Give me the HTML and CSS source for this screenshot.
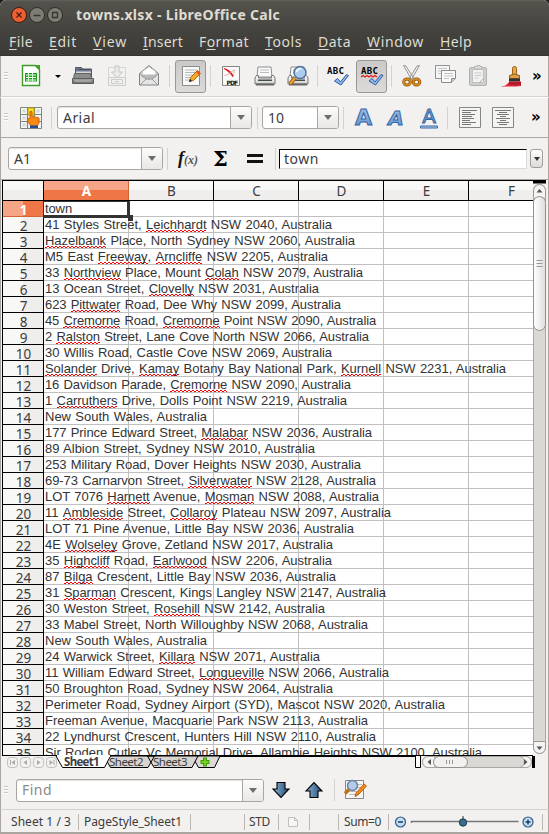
FILE: index.html
```html
<!DOCTYPE html>
<html lang="en">
<head>
<meta charset="utf-8">
<title>towns.xlsx - LibreOffice Calc</title>
<link rel="stylesheet" href="styles.css">
</head>
<body>
<svg width="0" height="0" class="defs">
  <defs>
    <linearGradient id="gray" x1="0" y1="0" x2="0" y2="1"><stop offset="0" stop-color="#a5a8a6"/><stop offset="1" stop-color="#6b6e6c"/></linearGradient>
    <linearGradient id="light" x1="0" y1="0" x2="0" y2="1"><stop offset="0" stop-color="#ffffff"/><stop offset="1" stop-color="#cfd1cf"/></linearGradient>
    <linearGradient id="navy" x1="0" y1="0" x2="1" y2="0"><stop offset="0" stop-color="#8fb4d8"/><stop offset="1" stop-color="#214a74"/></linearGradient>
    <linearGradient id="letter" x1="0" y1="0" x2="0" y2="1"><stop offset="0" stop-color="#a8c6ea"/><stop offset="1" stop-color="#5f8fce"/></linearGradient>
    <g id="check"><path d="M1 8 L4 5.500 L7 9 L13 1.500 L15 2.500 L7.500 12 Z" fill="#8fb8ec" stroke="#2d5ca0" stroke-linejoin="round"/></g>
    <g id="printer">
      <path d="M5 3h13l1 10H4z" fill="#fafafa" stroke="#8c8e8c"/>
      <path d="M7 6h9M7 8.500h9" stroke="#b9bbb9"/>
      <path d="M3.500 11.500 2 14v6h20v-6l-1.500-2.500h-2V14h-13v-2.500z" fill="url(#light)" stroke="#777"/>
      <path d="M5 15.500h14v1.500H5z" fill="#4b4d4b"/><path d="M3 20.500h18" stroke="#666" stroke-width="2"/>
    </g>
  </defs>
</svg>
<div class="window">
  <header class="titlebar">
    <svg class="wm" width="54" height="18" viewBox="0 0 54 18">
      <circle cx="8" cy="9" r="7.500" fill="#ec5f33" stroke="#3a1c10"/><path d="M5.500 6.500l5 5M10.500 6.500l-5 5" stroke="#4a1d10" stroke-width="1.300"/>
      <circle cx="26" cy="9" r="7.500" fill="#7d7c75" stroke="#2e2d29"/><path d="M22.500 9.500h7" stroke="#36352f" stroke-width="1.300"/>
      <circle cx="44" cy="9" r="7.500" fill="#7d7c75" stroke="#2e2d29"/><path d="M41.500 6.500h5v5h-5z" fill="none" stroke="#36352f" stroke-width="1.300"/>
    </svg>
    <h1><span data-w="204">towns.xlsx - LibreOffice Calc</span></h1>
  </header>
  <nav class="menubar">
    <span data-w="24"><u>F</u>ile</span><span data-w="28"><u>E</u>dit</span><span data-w="34"><u>V</u>iew</span><span data-w="40"><u>I</u>nsert</span><span data-w="50">F<u>o</u>rmat</span><span data-w="37"><u>T</u>ools</span><span data-w="33"><u>D</u>ata</span><span data-w="57"><u>W</u>indow</span><span data-w="32"><u>H</u>elp</span>
  </nav>

  <div class="toolbar standard">
    <i class="grip"></i>
    <svg width="24" height="24" viewBox="0 0 24 24"><path d="M2.500 1.500h13l4 4v16h-17z" fill="#fff" stroke="#3f9a28" stroke-width="1.400"/><path d="M14 1h6v6z" fill="#3aa51e"/><path d="M5 9h12v8.500H5z" fill="#17a017"/><path d="M6 11h10M6 13.500h10M6 16h10" stroke="#fff"/><path d="M8.500 9v8.500M12.500 9v8.500" stroke="#d8f3d4"/></svg>
    <i class="caret"></i>
    <svg width="24" height="24" viewBox="0 0 24 24"><path d="M4.500 3.500h6l1 1.500h9v8h-16z" fill="#70798f" stroke="#52565c"/><path d="M5 7.500h15V13H5z" fill="#d6d7d6"/><path d="M7 5.500h12" stroke="#49516b"/><path d="M3.500 9.500h16l1 5h-18z" fill="#8b8e8c" stroke="#606260"/><path d="M1.500 14.500h21v5h-21z" fill="url(#gray)" stroke="#5b5d5b"/><path d="M4 17h16" stroke="#bbb"/></svg>
    <svg class="off" width="24" height="24" viewBox="0 0 24 24"><path d="M3.500 3.500h17v12h-17z" fill="#f4f4f4" stroke="#aaa"/><path d="M10 2h4v6h3.500l-5.500 6-5.500-6H10z" fill="#e3e3e3" stroke="#888"/><path d="M3.500 13.500h17v8h-17zM6.500 15.500h11v4h-11zM10 17.500h4" fill="#eee" stroke="#999"/></svg>
    <svg width="24" height="24" viewBox="0 0 24 24"><path d="M2.500 9.500 12 1.500l9.500 8v11.500h-19z" fill="#e3e4e3" stroke="#808280"/><path d="M5 7.500 12 2.500l7 5v5l-7 3-7-3z" fill="#fff" stroke="#aeb0ae"/><path d="M4 10.500h16l-5 4.500H9z" fill="#b9bbb9"/><path d="M3 10l6 5h6l6-5M3 21l6-6M21 21l-6-6" fill="none" stroke="#9a9c9a"/></svg>
    <i class="sep"></i>
    <b class="pressed"><svg width="24" height="24" viewBox="0 0 24 24"><path d="M3.500 2.500h17v19h-17z" fill="#fafafa" stroke="#8a8c8a"/><path d="M6 6h12M6 8.500h10M6 11h12M6 13.500h6M6 16h5" stroke="#b6b8b6"/><path d="M10.500 17.500l1-4 7-7 3 3-7 7z" fill="#f9a928" stroke="#b36a0b"/><path d="M17 8l3 3 1.500-1.500-3-3z" fill="#e5541e"/><path d="M10 18l1-3 2 2z" fill="#222"/></svg></b>
    <i class="sep"></i>
    <svg width="24" height="24" viewBox="0 0 24 24"><path d="M2.500 2.500h17v19h-17z" fill="#fafafa" stroke="#858785"/><path d="M4 4c4 1 7 3 10 8l-1.500 1C10 9 7 7 4 5z" fill="#e31c1c"/><path d="M4.500 11.500c4-1 7-3 9.500-6v4" fill="none" stroke="#f2a0a0"/><path d="M6 14.500h12V21H6z" fill="#f8f8f8"/><text x="6.500" y="20.500" class="pdf" textLength="11.500">PDF</text></svg>
    <svg width="24" height="24" viewBox="0 0 24 24"><use href="#printer"/></svg>
    <svg width="24" height="24" viewBox="0 0 24 24"><use href="#printer"/><circle cx="14" cy="8.500" r="6" fill="#aaccef" stroke="#56749b" stroke-width="1.500"/><path d="M10.500 8a4 4 0 0 1 5-3" fill="none" stroke="#fff" stroke-width="1.500"/><path d="M9 14l-5 6" stroke="#9a5b0a" stroke-width="4"/><path d="M9 14l-5 6" stroke="#eda534" stroke-width="2"/></svg>
    <i class="sep"></i>
    <svg width="24" height="24" viewBox="0 0 24 24"><text x="2" y="10" class="abc" textLength="17">ABC</text><use href="#check" x="8.500" y="9"/></svg>
    <b class="pressed"><svg width="24" height="24" viewBox="0 0 24 24"><text x="1" y="10" class="abc" textLength="17">ABC</text><path d="M1 13l2-1.500 2 1.500 2-1.500 2 1.500 2-1.500 2 1.500 2-1.500 2 1.500" fill="none" stroke="#e01818" stroke-width="1.100"/><use href="#check" x="8" y="9"/></svg></b>
    <i class="sep"></i>
    <svg width="24" height="24" viewBox="0 0 24 24"><path d="M2.500 1.500 5 2l7.500 12-2 1.500zM18.500 1.500 16 2 8.500 14l2 1.500z" fill="#eee" stroke="#8a8c8a" stroke-width=".9"/><ellipse cx="6" cy="18" rx="3.300" ry="3" fill="none" stroke="#8a4d04" stroke-width="3"/><ellipse cx="6" cy="18" rx="3.300" ry="3" fill="none" stroke="#dc9020" stroke-width="1.500"/><ellipse cx="15.500" cy="18" rx="3.300" ry="3" fill="none" stroke="#8a4d04" stroke-width="3"/><ellipse cx="15.500" cy="18" rx="3.300" ry="3" fill="none" stroke="#dc9020" stroke-width="1.500"/></svg>
    <svg width="24" height="24" viewBox="0 0 24 24"><path d="M1.500 1.500h14v13h-14z" fill="#f4f4f4" stroke="#929492"/><path d="M4 4.500h9M4 7h9M4 9.500h4" stroke="#c6c8c6"/><path d="M7.500 6.500h14v8l-4 4h-10z" fill="#fafafa" stroke="#8a8c8a"/><path d="M21.500 14.500h-4v4" fill="#ccc" stroke="#8a8c8a"/><path d="M10 9.500h9M10 12h9M10 14.500h5" stroke="#bfc1bf"/></svg>
    <svg width="24" height="24" viewBox="0 0 24 24"><rect x="2.500" y="3.500" width="17" height="18" rx="1.500" fill="#cfcfce" stroke="#b2b2b1"/><path d="M5.500 5.500h11v13h-11z" fill="#f2f2f2" stroke="#c0c0c0"/><path d="M7.500 5V2.500h2.500V1.500h3V2.500H15V5z" fill="#ddd" stroke="#b4b4b4"/><path d="M7.500 9h7M7.500 11.500h7M7.500 14h4" stroke="#c9c9c9"/><path d="M12.500 18.500l4-4" stroke="#aaa"/></svg>
    <svg width="24" height="24" viewBox="0 0 24 24"><path d="M1 23c4-1 6-1 9-5h12v4c-7 1-14 0-21 1z" fill="#e5263b"/><rect x="13.500" y="2.500" width="4" height="9" rx="2" fill="#e8a84b" stroke="#9b6112"/><path d="M10.500 11.500q5-3 10 0v3h-10z" fill="#e0a04a" stroke="#8a5a1a"/><path d="M10 14.500h11v3H10z" fill="#303030"/><path d="M10 17.500h12v4l-3-1-2 1.500-2-1.500-2 1-3-1z" fill="#b5192a"/></svg>
    <span class="more">»</span>
  </div>

  <div class="toolbar formatting">
    <i class="grip"></i>
    <svg width="24" height="24" viewBox="0 0 24 24"><path d="M1.500 1.500h21v21h-21z" fill="#f5f6f5" stroke="#7d867e"/><path d="M8.500 1.500v21M15.500 1.500v21M1.500 8.500h21M1.500 15.500h21" stroke="#7d867e" stroke-width="1.200"/><path d="M3.500 3.500h3v3h-3zM3.500 10.500h3v3h-3zM3.500 17.500h3v3h-3zM17.500 3.500h3v3h-3z" fill="#d2d7d3"/><path d="M9 2h6v7H9z" fill="#ffe72b" stroke="#b49b00"/><path d="M11 5.500q1-1 2 0v5l7 1.500v5L18 20h-6l-3.500-5v-3l2.500 1z" fill="#fa8a15" stroke="#d35f00"/><path d="M11 19.500h8V22h-8z" fill="#254c8e"/></svg>
    <i class="sep"></i>
    <div class="combo"><span data-w="32">Arial</span><i></i></div>
    <i class="sep"></i>
    <div class="combo"><span data-w="16">10</span><i></i></div>
    <i class="sep"></i>
    <svg width="24" height="24" viewBox="0 0 24 24"><text x="12.500" y="18.500" class="style bold" text-anchor="middle">A</text></svg>
    <svg width="24" height="24" viewBox="0 0 24 24"><text x="12" y="18.500" class="style italic" text-anchor="middle">A</text></svg>
    <svg width="24" height="24" viewBox="0 0 24 24"><text x="13" y="16.500" class="style" text-anchor="middle">A</text><path d="M4.500 20h17v2h-17z" fill="#b4d0f0" stroke="#3465a4"/></svg>
    <i class="sep"></i>
    <svg width="24" height="24" viewBox="0 0 24 24"><path d="M3.500 1.500h21v20h-21z" fill="#f4f5f3" stroke="#858785"/><path d="M6 4.500h15M6 6.500h9M6 8.500h13M6 10.500h10M6 12.500h12M6 14.500h8M6 16.500h14M6 18.500h9" stroke="#777977"/></svg>
    <svg width="26" height="24" viewBox="0 0 26 24"><path d="M3.500 1.500h21v20h-21z" fill="#f4f5f3" stroke="#858785"/><path d="M6 4.500h16M10 6.500h8M8 8.500h12M11 10.500h6M7 12.500h14M11 14.500h6M8 16.500h12M10 18.500h8" stroke="#777977"/></svg>
    <span class="more">»</span>
  </div>

  <div class="toolbar formula">
    <div class="combo"><span data-w="17">A1</span><i></i></div>
    <i class="sep"></i>
    <span class="fx"><span>f</span><small>(x)</small></span>
    <span class="sigma">Σ</span>
    <i class="equals"></i>
    <i class="sep"></i>
    <div class="line"><span data-w="35">town</span></div>
    <i class="expand"></i>
  </div>

  <main class="sheet">
    <div class="grid">
      <div class="cols"><i></i><b>A</b><span>B</span><span>C</span><span>D</span><span>E</span><span>F</span></div>
      <div class="rows" id="rows"></div>
    </div>
    <div class="vscroll">
      <svg width="14" height="575" viewBox="0 0 14 575"><rect x=".5" y="4.500" width="12" height="569" rx="6" fill="#dad8d5" stroke="#aaa7a2"/><path d="M.5 17V10.500a6 6 0 0 1 12 0V17" fill="#f5f4f3" stroke="#9b9893"/><path d="M3.500 12.500h6L6.500 9z" fill="#555"/><rect x=".5" y="16.500" width="12" height="134" rx="6" fill="url(#thumb)" stroke="#94918c"/><path d="M3.500 80.500h6M3.500 83.500h6M3.500 86.500h6" stroke="#999"/><path d="M.5 561.500h12v6a6 6 0 0 1-12 0z" fill="#f5f4f3" stroke="#9b9893"/><path d="M3.500 566.500h6l-3 3.500z" fill="#555"/><path d="M0 0h13v3.500H0z"/><linearGradient id="thumb"><stop offset="0" stop-color="#fff"/><stop offset="1" stop-color="#dedcd9"/></linearGradient></svg>
    </div>
  </main>

  <div class="tabs">
    <svg class="nav" width="54" height="13" viewBox="0 0 54 13"><g fill="#f2f1f0" stroke="#c2bfbb"><rect x="1.500" y="1.500" width="10" height="10" rx="3"/><rect x="14.500" y="1.500" width="10" height="10" rx="3"/><rect x="27.500" y="1.500" width="10" height="10" rx="3"/><rect x="40.500" y="1.500" width="10" height="10" rx="3"/></g><path d="M9 4v5L5.500 6.500zM21 4v5l-3.500-2.500zM31 4v5l3.500-2.500zM43.500 4v5L47 6.500z" fill="#aaa"/><path d="M4.500 4v5M48 4v5" stroke="#aaa"/></svg>
    <div class="tabstrip">
      <svg width="165" height="13" viewBox="0 0 165 13"><path d="M136 0l6.500 11.500h16L164 .0z" fill="#dddad6" stroke="#000"/><path d="M91.500 0 98 11.500h38L142 0zM48 0l6.500 11.500H92L98.500 0z" fill="#d8d5d1" stroke="#000"/><path d="M0 0l6.500 11.500h42L54.500 0z" fill="#fff" stroke="#000"/><path d="M1 0h53" stroke="#fff" stroke-width="2"/><path d="M149 1.500v9M144.500 6h9" stroke="#3f9a18" stroke-width="4"/><path d="M149 2.500v7M145.500 6h7" stroke="#73d216" stroke-width="2"/></svg>
      <div class="labels"><b data-w="35">Sheet1</b><span data-w="34">Sheet2</span><span data-w="34">Sheet3</span></div>
    </div>
    <svg class="hscroll" width="121" height="13" viewBox="0 0 121 13"><path d="M.5 0v11.500h5V0" fill="#fff" stroke="#000"/><rect x="7.500" y=".5" width="109" height="11" rx="5.500" fill="#dad8d5" stroke="#aaa7a2"/><path d="M20 .5h-7a5.500 5.500 0 0 0 0 11h7zM104 .5h7a5.500 5.500 0 0 1 0 11h-7a5.500 5.500 0 0 0 0-11" fill="#f5f4f3" stroke="#aaa7a2"/><rect x="18.500" y=".5" width="34" height="11" rx="5.500" fill="#f2f1f0" stroke="#94918c"/><path d="M31.500 4v4M34.500 4v4M37.500 4v4" stroke="#999"/><path d="M16 3v6l-3.500-3zM109 3v6l3.500-3z" fill="#555"/><path d="M117 0h3v12h-3z"/></svg>
  </div>

  <div class="toolbar find">
    <i class="grip"></i>
    <div class="combo hint"><span data-w="30">Find</span><i></i></div>
    <svg width="18" height="18" viewBox="0 0 18 18"><path d="M5 1.500h8V8h4l-8 8.500L1 8h4z" fill="url(#navy)" stroke="#000" stroke-width="1.100"/></svg>
    <svg width="18" height="18" viewBox="0 0 18 18"><path d="M5 16.500h8V10h4L9 1.500 1 10h4z" fill="url(#navy)" stroke="#000" stroke-width="1.100"/></svg>
    <i class="sep"></i>
    <svg width="24" height="24" viewBox="0 0 24 24"><path d="M2.500 2.500h18v18h-18z" fill="#f6f6f6" stroke="#858785"/><path d="M12 6.500h7M12 9.500h6M6 13.500h10M6 16.500h8" stroke="#bbb"/><circle cx="9.500" cy="7.500" r="5" fill="#b4cbe6" stroke="#6b83a3" stroke-width="1.500"/><path d="M6 11.500l-4 4" stroke="#b87314" stroke-width="3.500"/><path d="M12 18.500l1-3.500 8-9 2.500 2-8.500 9z" fill="#f28a1c" stroke="#b9600b"/></svg>
  </div>

  <footer class="status">
    <span data-w="60">Sheet 1 / 3</span><i></i><span data-w="98">PageStyle_Sheet1</span><i></i><span></span><i></i><span data-w="21">STD</span><i></i>
    <svg width="12" height="12" viewBox="0 0 12 12"><path d="M1.500 1.500h6l3 3v6h-9z" fill="#f7f6f5" stroke="#c2bfbb"/><path d="M7.500 1.500v3h3" fill="none" stroke="#c2bfbb"/></svg>
    <i></i><span></span><i></i><span data-w="37">Sum=0</span><i></i>
    <svg width="142" height="14" viewBox="0 0 142 14"><g fill="#c5dcf2" stroke="#2f5b85" stroke-width="1.200"><circle cx="7.500" cy="7" r="5"/><circle cx="135" cy="7" r="5"/></g><path d="M5 7h5M132.500 7h5M135 4.500v5" stroke="#163d66" stroke-width="1.500"/><path d="M18.500 8V6.500h107" fill="none" stroke="#777" stroke-width="1.500"/><circle cx="70" cy="7.500" r="3.700" fill="#3b6b8b" stroke="#173c52"/><path d="M70 1v3" stroke="#333"/></svg>
    <i></i>
  </footer>
</div>
<script src="sheet.js"></script>
</body>
</html>
```
FILE: styles.css
```css
*, *::before, *::after { box-sizing: border-box; }
body { margin: 0; background: #1c1b19; color: #3c3c3c; font: 14px/18px "Noto Sans", "Open Sans", sans-serif; }
i, u { font-style: normal; }
svg { display: block; overflow: visible; }
.defs { position: absolute; }
[data-w] { display: inline-block; white-space: pre; }
.window { width: 549px; height: 834px; overflow: hidden; background: #f2f1f0; border-radius: 6px 6px 0 0; display: flex; flex-direction: column; }
.window > * { flex: none; }

.titlebar { height: 28px; background: linear-gradient(#62615a 0, #53524c 2px, #45443f 100%); display: flex; align-items: center; padding: 1px 0 0 11px; }
.titlebar h1 { margin: 0 0 0 11px; font-size: 14px; line-height: 18px; font-weight: 700; color: #dfdbd2; }
.menubar { height: 28px; background: linear-gradient(#44433e, #3c3b37); color: #dfdbd2; display: flex; align-items: center; gap: 16px; padding-left: 9px; border-bottom: 1px solid #34332f; }
.menubar u { text-decoration: underline; text-underline-offset: 2px; text-decoration-thickness: 1px; }

.toolbar { display: grid; align-items: center; border-left: 1px solid #aaa59e; border-right: 1px solid #aaa59e; }
.standard { height: 41px; padding-left: 3px; border-bottom: 1px solid #d3d0cc; grid-template-columns: 16px 34px 17px 34px 32px 32px 6px 35px 10px 33px 33px 31px 8px 31px 35px 10px 33px 33px 32px 33px 14px; }
.formatting { height: 41px; padding-left: 3px; border-bottom: 1px solid #aaa7a2; border-top: 1px solid #fff; grid-template-columns: 15px 32px 6px 200px 5px 81px 8px 33px 32px 31px 9px 33px 42px 14px; }
.formula { height: 42px; padding-left: 7px; border-bottom: 1px solid #aaa7a2; grid-template-columns: 159px 11px 35px 34px 28px 4px 251px 14px; }
.off { opacity: .4; }
.grip { width: 4px; height: 9px; background: repeating-linear-gradient(#cbc8c4 0 1px, #fff 1px 2px, transparent 2px 3px); }
.sep { width: 1px; height: 22px; background: #d5d2ce; }
.caret { width: 0; height: 0; border: 3px solid transparent; border-top: 3px solid #000; border-bottom: 0; margin-left: 1px; }
.pressed { width: 31px; height: 33px; border: 1px solid #999793; border-radius: 3px; background: linear-gradient(#cbc9c7, #dddbd9); display: grid; place-items: center; }
.more { font: bold 15px/18px "DejaVu Sans", sans-serif; color: #000; margin-top: -1px; }
.abc { font: bold 9px "DejaVu Sans Mono", monospace; fill: #000; }
.pdf { font: bold 6px "DejaVu Sans", sans-serif; fill: #111; }
.style { font: 20px "DejaVu Sans", sans-serif; fill: url(#letter); stroke: #3465a4; stroke-width: 1px; }
.style.bold { font-weight: bold; font-size: 22px; }
.style.italic { font-weight: bold; font-style: oblique; font-size: 20px; }

.combo { height: 23px; border: 1px solid #a9a6a1; border-radius: 3px; background: #fff; display: flex; align-items: center; justify-content: space-between; padding-left: 5px; box-shadow: inset 0 1px 1px #e4e2df; width: 195px; }
.combo i { width: 21px; align-self: stretch; border-left: 1px solid #a9a6a1; background: linear-gradient(#fbfbfa, #e9e8e6); border-radius: 0 2px 2px 0; display: grid; place-items: center; }
.combo i::after { content: ""; border: 4px solid transparent; border-top: 5px solid #6d6d6d; border-bottom: 0; }
.sep + .combo + .sep + .combo { width: 77px; }
.formula .combo { width: 155px; }
.fx { font: italic bold 18px/22px "Liberation Serif", serif; color: #111; white-space: nowrap; }
.fx small { font-size: 12px; color: #555; }
.sigma { font: bold 21px/24px "DejaVu Serif", "Liberation Serif", serif; color: #000; }
.equals { width: 16px; height: 9px; border: solid #111; border-width: 3px 0; }
.line { height: 20px; width: 248px; background: #fff; border: 1px solid #dcdad7; border-top: 1px solid #000; border-left: 1px solid #000; padding-left: 4px; line-height: 18px; }
.expand { width: 13px; height: 19px; border: 1px solid #a19e99; border-radius: 3px; background: linear-gradient(#fff, #dcdad7); display: grid; place-items: center; }
.expand::after { content: ""; border: 3.5px solid transparent; border-top: 4px solid #333; border-bottom: 0; }

.sheet { height: 576px; display: flex; border-left: 1px solid #aaa59e; border-right: 1px solid #aaa59e; padding-left: 1px; }
.grid { width: 531px; border: solid #000; border-width: 1px 0 1px 1px; overflow: hidden; display: flex; flex-direction: column; }
.cols { flex: none; display: grid; grid-template-columns: 41px repeat(6, 85px); height: 20px; border-bottom: 1px solid #000; font-size: 13.500px; line-height: 21px; text-align: center; background: linear-gradient(#f8f8f7 50%, #efeeed 50%); }
.cols > * { border-right: 1px solid #000; height: 19px; padding-left: 1px; }
.cols b { color: #fff; border-color: #d4643a; background: linear-gradient(#f7a587 50%, #ef7646 50%); }
.rows { flex: none; background: repeating-linear-gradient(90deg, transparent 0 84px, #c0c0c0 84px 85px) 41px 0 / 510px 100% no-repeat #fff; }
.row { display: grid; grid-template-columns: 41px 1fr; height: 16px; white-space: pre; }
.row > :first-child { border-right: 1px solid #000; border-bottom: 1px solid #000; height: 16px; font-weight: 400; font-size: 13.500px; line-height: 18px; text-align: center; padding-left: 1px; background: linear-gradient(90deg, #f8f8f7 50%, #efeeed 50%); }
.cell { border-bottom: 1px solid #c0c0c0; font: 13px/15px "Liberation Sans", Arial, sans-serif; padding-left: 1px; color: #333; }
.cell [data-w] { word-spacing: .8px; }
.cell em { font-style: normal; display: inline-block; height: 15px; background: linear-gradient(90deg, transparent 50%, #f00 50%) 0 13px / 4px 1px repeat-x, linear-gradient(90deg, #f00 50%, transparent 50%) 0 14px / 4px 1px repeat-x; }
.row.current { position: relative; }
.row.current > :first-child { background: linear-gradient(90deg, #f7a587 50%, #ef7646 50%); color: #fff; font-weight: 700; border-bottom-color: #d4643a; }
.row.current::after { content: ""; position: absolute; left: 40px; top: 0; width: 87px; height: 17px; border: solid #333; border-width: 1px 3px 3px 1px; }
.row.current::before { content: ""; position: absolute; left: 125px; top: 14px; width: 5px; height: 6px; background: #333; z-index: 1; }

.tabs { height: 13px; display: flex; border-left: 1px solid #aaa59e; border-right: 1px solid #aaa59e; padding-left: 5px; }
.tabstrip { display: grid; width: 359px; margin-left: -4px; border-top: 1px solid #000; }
.tabstrip > * { grid-area: 1 / 1; }
.tabstrip svg { margin-top: -1px; }
.labels { display: flex; gap: 10px; padding-left: 8px; font-size: 11.500px; line-height: 10px; }

.find { height: 41px; padding: 2px 0 0 3px; border-bottom: 1px solid #d5d2ce; grid-template-columns: 12px 256px 33px 29px 9px 30px; }
.find .combo { width: 248px; }
.hint { color: #8a8a8a; }
.status { height: 24px; border: solid #aaa59e; border-width: 0 1px 2px; display: grid; align-items: center; justify-items: start; font-size: 12px; line-height: 16px; grid-template-columns: 67px 6px 106px 1px 53px 5px 29px 9px 22px 1px 28px 6px 44px 5px 149px 1px; padding: 2px 0 0 10px; }
.status i { width: 1px; height: 16px; background: #b9b6b1; }
```
FILE: sheet.js
```js
// Cell text with the width it occupies; *word* marks an unknown spelling.
const cells = [
  ["town", 27],
  ["41 Styles Street, *Leichhardt* NSW 2040, Australia", 287],
  ["*Hazelbank* Place, North Sydney NSW 2060, Australia", 310],
  ["M5 East *Freeway*, *Arncliffe* NSW 2205, Australia", 283],
  ["33 *Northview* Place, Mount *Colah* NSW 2079, Australia", 318],
  ["13 Ocean Street, *Clovelly* NSW 2031, Australia", 274],
  ["623 *Pittwater* Road, Dee Why NSW 2099, Australia", 296],
  ["45 *Cremorne* Road, *Cremorne* Point NSW 2090, Australia", 331],
  ["2 *Ralston* Street, Lane Cove North NSW 2066, Australia", 324],
  ["30 Willis Road, Castle Cove NSW 2069, Australia", 287],
  ["*Solander* Drive, *Kamay* Botany Bay National Park, *Kurnell* NSW 2231, Australia", 461],
  ["16 Davidson Parade, *Cremorne* NSW 2090, Australia", 306],
  ["1 *Carruthers* Drive, Dolls Point NSW 2219, Australia", 302],
  ["New South Wales, Australia", 162],
  ["177 Prince Edward Street, *Malabar* NSW 2036, Australia", 327],
  ["89 Albion Street, Sydney NSW 2010, Australia", 270],
  ["253 Military Road, Dover Heights NSW 2030, Australia", 316],
  ["69-73 Carnarvon Street, *Silverwater* NSW 2128, Australia", 331],
  ["LOT 7076 *Harnett* Avenue, *Mosman* NSW 2088, Australia", 334],
  ["11 *Ambleside* Street, *Collaroy* Plateau NSW 2097, Australia", 346],
  ["LOT 71 Pine Avenue, Little Bay NSW 2036, Australia", 309],
  ["4E *Wolseley* Grove, Zetland NSW 2017, Australia", 288],
  ["35 *Highcliff* Road, *Earlwood* NSW 2206, Australia", 287],
  ["87 *Bilga* Crescent, Little Bay NSW 2036, Australia", 291],
  ["31 *Sparman* Crescent, Kings Langley NSW 2147, Australia", 341],
  ["30 Weston Street, *Rosehill* NSW 2142, Australia", 280],
  ["33 Mabel Street, North Willoughby NSW 2068, Australia", 323],
  ["New South Wales, Australia", 162],
  ["24 Warwick Street, *Killara* NSW 2071, Australia", 275],
  ["11 William Edward Street, *Longueville* NSW 2066, Australia", 344],
  ["50 Broughton Road, Sydney NSW 2064, Australia", 288],
  ["Perimeter Road, Sydney Airport (SYD), Mascot NSW 2020, Australia", 400],
  ["Freeman Avenue, Macquarie Park NSW 2113, Australia", 323],
  ["22 Lyndhurst Crescent, Hunters Hill NSW 2110, Australia", 331],
  ["Sir Roden Cutler Vc Memorial Drive, Allambie Heights NSW 2100, Australia", 437]
];

document.getElementById("rows").innerHTML = cells.map(([text, width], i) => {
  const marked = text.replace(/\*(.+?)\*/g, "<em>$1</em>");
  return `<div class="row${i ? "" : " current"}"><span>${i + 1}</span><div class="cell"><span data-w="${width}">${marked}</span></div></div>`;
}).join("");

// Track each label so that it fills its stated width.
for (const el of document.querySelectorAll("[data-w]")) {
  const spare = Number(el.dataset.w) - el.getBoundingClientRect().width;
  el.style.letterSpacing = spare / el.textContent.length + "px";
}
```
